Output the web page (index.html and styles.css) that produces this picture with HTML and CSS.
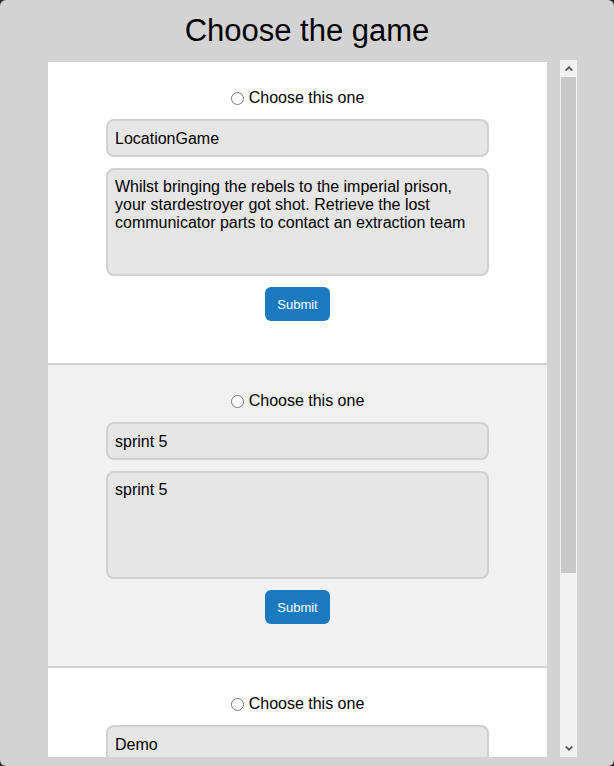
FILE: index.html
```html
<!DOCTYPE html>
<html lang="en">
<head>
<meta charset="utf-8">
<title>Choose the game</title>
<link rel="stylesheet" href="styles.css">
</head>
<body>
<div class="window">
  <h1 class="title">Choose the game</h1>
  <div class="scroller">
    <div class="list">
      <form class="item">
        <label class="choose"><input type="radio" name="game" class="radio"><span>Choose this one</span></label>
        <input class="field" type="text" value="LocationGame">
        <textarea class="area">Whilst bringing the rebels to the imperial prison, your stardestroyer got shot. Retrieve the lost communicator parts to contact an extraction team</textarea>
        <button type="button" class="submit">Submit</button>
      </form>
      <form class="item alt">
        <label class="choose"><input type="radio" name="game" class="radio"><span>Choose this one</span></label>
        <input class="field" type="text" value="sprint 5">
        <textarea class="area">sprint 5</textarea>
        <button type="button" class="submit">Submit</button>
      </form>
      <form class="item">
        <label class="choose"><input type="radio" name="game" class="radio"><span>Choose this one</span></label>
        <input class="field" type="text" value="Demo">
        <textarea class="area">Demo</textarea>
        <button type="button" class="submit">Submit</button>
      </form>
    </div>
    <div class="scrollbar">
      <div class="sb-btn">
        <svg width="8" height="5" viewBox="0 0 8 5"><polygon points="0,4 4,0 8,4 6.5,5 4,2.4 1.5,5" fill="#505050"/></svg>
      </div>
      <div class="sb-track"><div class="sb-thumb"></div></div>
      <div class="sb-btn">
        <svg width="8" height="5" viewBox="0 0 8 5"><polygon points="0,1 4,5 8,1 6.5,0 4,2.6 1.5,0" fill="#505050"/></svg>
      </div>
    </div>
  </div>
</div>
</body>
</html>
```
FILE: styles.css
```css
html, body {
  margin: 0;
  padding: 0;
  background: #2a2a2a;
}
body {
  font-family: "Liberation Sans", Arial, sans-serif;
  color: #000;
}
.window {
  height: 766px;
  background: #d3d3d3;
  border-radius: 6px;
  display: flex;
  flex-direction: column;
  overflow: hidden;
}
.title {
  margin: 13px 0 11px;
  font-size: 31px;
  line-height: 36px;
  font-weight: normal;
  text-align: center;
}
.scroller {
  flex: 1;
  min-height: 0;
  display: flex;
  gap: 13px;
  margin: 0 37px 9px 48px;
}
.list {
  flex: 1;
  margin-top: 2px;
  overflow: hidden;
  background: #fff;
}
.item {
  display: flex;
  flex-direction: column;
  align-items: center;
  padding: 26px 0 42px;
  background: #fff;
  border-bottom: 2px solid #d3d3d3;
}
.item.alt {
  background: #f1f1f1;
}
.choose {
  height: 20px;
  display: flex;
  align-items: center;
  font-size: 16px;
}
.radio {
  width: 13px;
  height: 13px;
  margin: 0 5px 0 0;
}
.field, .area {
  box-sizing: border-box;
  width: 383px;
  border: 2px solid #d0d0d0;
  border-radius: 8px;
  background: #e6e6e6;
  font-family: "Liberation Sans", Arial, sans-serif;
  font-size: 16px;
  color: #000;
  outline: none;
}
.field {
  margin-top: 11px;
  height: 38px;
  padding: 1px 7px 0;
}
.area {
  margin-top: 11px;
  height: 108px;
  padding: 8px 7px 7px;
  line-height: 18px;
  resize: none;
  overflow: hidden;
}
.submit {
  margin-top: 11px;
  width: 65px;
  height: 34px;
  border: none;
  border-radius: 6px;
  background: #1b7abf;
  color: #fff;
  font-family: "Liberation Sans", Arial, sans-serif;
  font-size: 13px;
  padding: 0;
}
.scrollbar {
  width: 17px;
  display: flex;
  flex-direction: column;
  background: #f1f1f1;
}
.sb-btn {
  height: 17px;
  display: flex;
  align-items: center;
  justify-content: center;
}
.sb-track {
  flex: 1;
  display: flex;
  flex-direction: column;
}
.sb-thumb {
  height: 496px;
  margin: 0 1px;
  background: #c8c8c8;
}
```
